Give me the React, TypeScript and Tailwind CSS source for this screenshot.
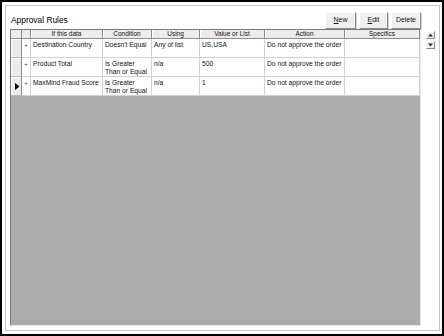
import React from "react";

const cols = ["If this data", "Condition", "Using", "Value or List", "Action", "Specifics"];

const rows: { cells: string[][]; selected?: boolean }[] = [
  { cells: [["Destination Country"], ["Doesn't Equal"], ["Any of list"], ["US,USA"], ["Do not approve the order"], [""]] },
  { cells: [["Product Total"], ["Is Greater", "Than or Equal"], ["n/a"], ["500"], ["Do not approve the order"], [""]] },
  { cells: [["MaxMind Fraud Score"], ["Is Greater", "Than or Equal"], ["n/a"], ["1"], ["Do not approve the order"], [""]], selected: true },
];

function Btn({ children }: { children: React.ReactNode }) {
  return (
    <div className="h-[17px] flex items-center justify-center bg-[#efefef] border border-t-[#ffffff] border-l-[#ffffff] border-r-[#8c8c8c] border-b-[#8c8c8c] shadow-[1px_1px_0_#d0d0d0] text-[6.9px] text-[#111]">
      {children}
    </div>
  );
}

function ScrollBtn({ up }: { up?: boolean }) {
  return (
    <div className="w-[9px] h-[8px] flex flex-col items-center justify-center bg-[#efefef] border border-t-[#ffffff] border-l-[#ffffff] border-r-[#8c8c8c] border-b-[#8c8c8c]">
      <svg width="5" height="4" viewBox="0 0 5 4">
        {up ? <polygon points="2.5,0.5 5,3.5 0,3.5" fill="#333" /> : <polygon points="0,0.5 5,0.5 2.5,3.5" fill="#333" />}
      </svg>
    </div>
  );
}

export default function App() {
  return (
    <div
      className="w-[444px] h-[336px] bg-black p-[2px]"
      style={{ fontFamily: '"Liberation Sans", Arial, sans-serif' }}
    >
      <div className="w-full h-full bg-white pt-[3px] pl-[3px] pr-[2px] pb-[3px]">
        <div className="w-full h-full border border-[#c4c4c4] bg-white flex flex-col pl-[4px] pr-[3px] pt-[6px] pb-[4px]">
          <div className="flex items-end h-[17px]">
            <div className="pl-[1px] pb-[5px] text-[8.4px] text-[#000] leading-none">Approval Rules</div>
            <div className="flex-1" />
            <div className="flex gap-[3px] mr-[15px]">
              <div className="w-[31px]">
                <Btn>
                  <span><span className="underline">N</span>ew</span>
                </Btn>
              </div>
              <div className="w-[29px]">
                <Btn>
                  <span><span className="underline">E</span>dit</span>
                </Btn>
              </div>
              <div className="w-[30px]">
                <Btn>Delete</Btn>
              </div>
            </div>
          </div>
          <div className="flex-1 flex">
            <div className="w-[411px] flex flex-col bg-[#ababab] border-l border-t border-l-[#7a7a7a] border-t-[#7a7a7a] border-r border-b border-r-[#e6e6e6] border-b-[#e6e6e6] text-[#111]">
              <div className="grid grid-cols-[11px_9px_72px_49px_48px_65px_80px_75px]">
                <div className="h-[9px] bg-[#ececec] border-r border-b border-[#8c8c8c]" />
                <div className="h-[9px] bg-[#ececec] border-r border-b border-[#8c8c8c]" />
                {cols.map((c) => (
                  <div
                    key={c}
                    className="h-[9px] bg-[#ececec] border-r border-b border-[#8c8c8c] shadow-[inset_1px_0_0_#ffffff] flex items-center justify-center text-[6.5px] leading-none"
                  >
                    {c}
                  </div>
                ))}
                {rows.map((r, i) => (
                  <React.Fragment key={i}>
                    <div className="h-[19px] bg-[#ebebeb] border-r border-b border-r-[#8c8c8c] border-b-[#b8b8b8] shadow-[inset_1px_1px_0_#ffffff] flex items-center justify-center">
                      {r.selected && (
                        <svg width="5" height="7" viewBox="0 0 5 7" className="ml-[2px]">
                          <polygon points="0,0 4.5,3.5 0,7" fill="#000" />
                        </svg>
                      )}
                    </div>
                    <div className="h-[19px] bg-white border-r border-b border-[#d2d2d2] flex justify-center pt-[3px] text-[6px] leading-none text-[#444]">
                      +
                    </div>
                    {r.cells.map((lines, j) => (
                      <div
                        key={j}
                        className="h-[19px] bg-white border-r border-b border-[#d2d2d2] pl-[2px] pt-[2px] text-[6.7px] leading-[8px] whitespace-nowrap overflow-hidden"
                      >
                        {lines.map((l, k) => (
                          <div key={k}>{l}</div>
                        ))}
                      </div>
                    ))}
                  </React.Fragment>
                ))}
              </div>
            </div>
            <div className="flex flex-col ml-[5px] mt-[2px] gap-[2px]">
              <ScrollBtn up />
              <ScrollBtn />
            </div>
          </div>
        </div>
      </div>
    </div>
  );
}
